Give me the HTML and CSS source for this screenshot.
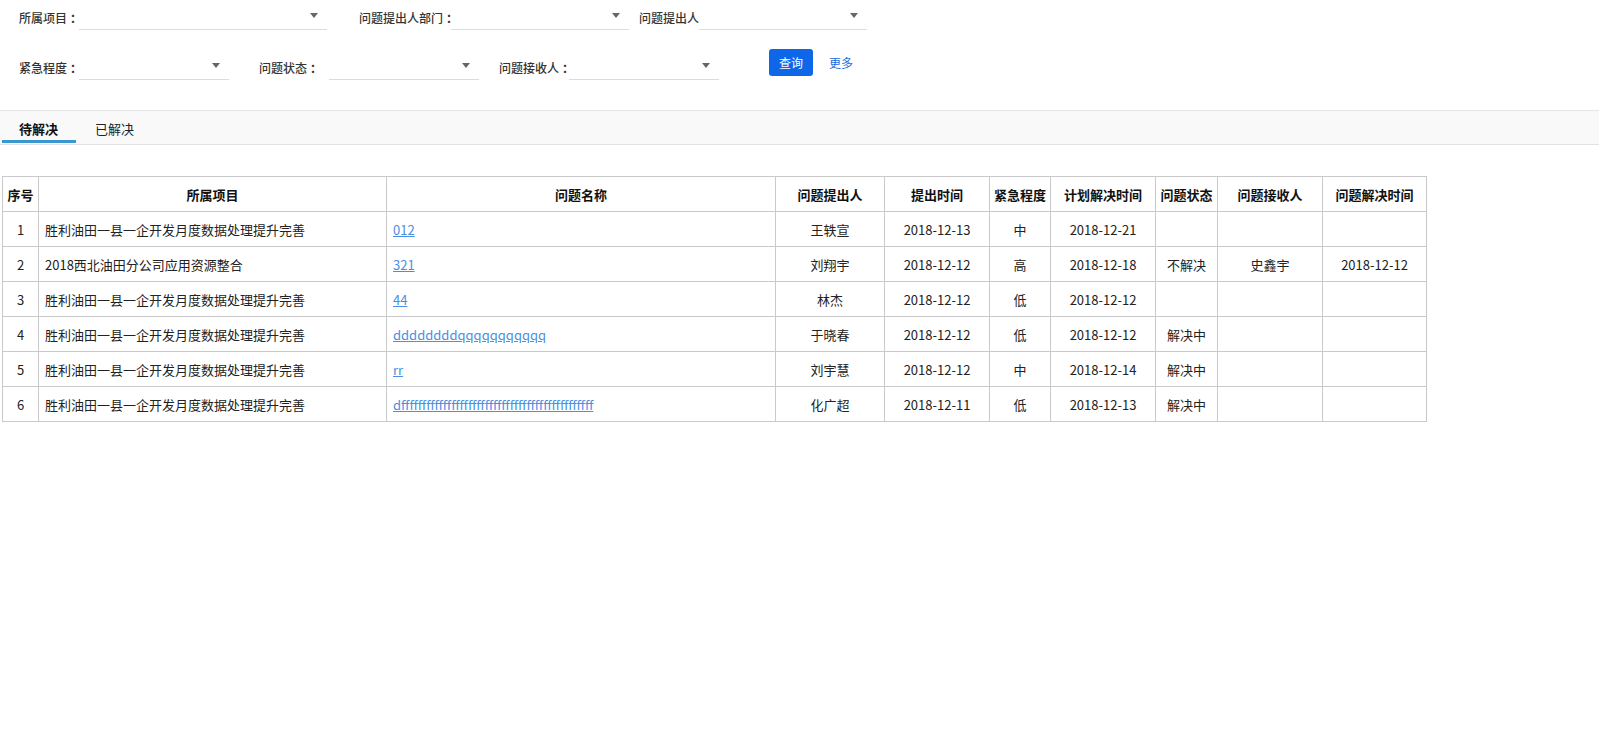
FILE: index.html
```html
<!DOCTYPE html>
<html lang="zh-CN">
<head>
<meta charset="utf-8">
<title>问题列表</title>
<link rel="stylesheet" href="styles.css">
</head>
<body>
<div class="filters">
  <div class="frow frow-1">
    <label class="lbl w60">所属项目<span class="colon">：</span></label>
    <div class="sel w248"><span class="caret"></span></div>
    <label class="lbl w92 ml32">问题提出人部门<span class="colon">：</span></label>
    <div class="sel w178"><span class="caret"></span></div>
    <label class="lbl w60 ml10">问题提出人</label>
    <div class="sel w168"><span class="caret"></span></div>
  </div>
  <div class="frow frow-2">
    <label class="lbl w60">紧急程度<span class="colon">：</span></label>
    <div class="sel w150"><span class="caret"></span></div>
    <label class="lbl w70 ml30">问题状态<span class="colon">：</span></label>
    <div class="sel w150"><span class="caret"></span></div>
    <label class="lbl w70 ml20">问题接收人<span class="colon">：</span></label>
    <div class="sel w150"><span class="caret"></span></div>
    <button class="btn-query">查询</button>
    <a class="more">更多</a>
  </div>
</div>

<div class="tabs">
  <div class="tab active">待解决</div>
  <div class="tab">已解决</div>
</div>

<div class="table-wrap">
<table class="grid">
  <colgroup>
    <col style="width:36px"><col style="width:348px"><col style="width:389px"><col style="width:109px"><col style="width:105px"><col style="width:61px"><col style="width:105px"><col style="width:62px"><col style="width:105px"><col style="width:104px">
  </colgroup>
  <thead>
    <tr><th>序号</th><th>所属项目</th><th>问题名称</th><th>问题提出人</th><th>提出时间</th><th>紧急程度</th><th>计划解决时间</th><th>问题状态</th><th>问题接收人</th><th>问题解决时间</th></tr>
  </thead>
  <tbody>
    <tr><td class="c">1</td><td class="l">胜利油田一县一企开发月度数据处理提升完善</td><td class="l"><a>012</a></td><td class="c">王轶宣</td><td class="c">2018-12-13</td><td class="c">中</td><td class="c">2018-12-21</td><td class="c"></td><td class="c"></td><td class="c"></td></tr>
    <tr><td class="c">2</td><td class="l">2018西北油田分公司应用资源整合</td><td class="l"><a>321</a></td><td class="c">刘翔宇</td><td class="c">2018-12-12</td><td class="c">高</td><td class="c">2018-12-18</td><td class="c">不解决</td><td class="c">史鑫宇</td><td class="c">2018-12-12</td></tr>
    <tr><td class="c">3</td><td class="l">胜利油田一县一企开发月度数据处理提升完善</td><td class="l"><a>44</a></td><td class="c">林杰</td><td class="c">2018-12-12</td><td class="c">低</td><td class="c">2018-12-12</td><td class="c"></td><td class="c"></td><td class="c"></td></tr>
    <tr><td class="c">4</td><td class="l">胜利油田一县一企开发月度数据处理提升完善</td><td class="l"><a>ddddddddqqqqqqqqqqq</a></td><td class="c">于晓春</td><td class="c">2018-12-12</td><td class="c">低</td><td class="c">2018-12-12</td><td class="c">解决中</td><td class="c"></td><td class="c"></td></tr>
    <tr><td class="c">5</td><td class="l">胜利油田一县一企开发月度数据处理提升完善</td><td class="l"><a>rr</a></td><td class="c">刘宇慧</td><td class="c">2018-12-12</td><td class="c">中</td><td class="c">2018-12-14</td><td class="c">解决中</td><td class="c"></td><td class="c"></td></tr>
    <tr><td class="c">6</td><td class="l">胜利油田一县一企开发月度数据处理提升完善</td><td class="l"><a>dffffffffffffffffffffffffffffffffffffffffffffff</a></td><td class="c">化广超</td><td class="c">2018-12-11</td><td class="c">低</td><td class="c">2018-12-13</td><td class="c">解决中</td><td class="c"></td><td class="c"></td></tr>
  </tbody>
</table>
</div>
</body>
</html>
```

FILE: styles.css
```css
* { box-sizing: border-box; }
html, body {
  margin: 0;
  padding: 0;
  background: #fff;
  font-family: "Microsoft YaHei", "Noto Sans CJK SC", "Noto Sans", sans-serif;
  color: #333;
}

.filters {
  height: 110px;
  padding-left: 19px;
}
.frow {
  display: flex;
  align-items: center;
}
.frow-1 { padding-top: 5px; height: 30px; box-sizing: content-box; }
.frow-2 { margin-top: 20px; height: 30px; }

.lbl {
  font-size: 12px;
  color: #333;
  line-height: 25px;
  white-space: nowrap;
  align-self: flex-start;
  font-weight: 500;
}
.colon {
  display: inline-block;
  padding-left: 3px;
  font-weight: bold;
}
.sel {
  height: 25px;
  border-bottom: 1px solid #dcdcdc;
  display: flex;
  justify-content: flex-end;
  align-items: flex-start;
  padding-top: 8px;
  padding-right: 9px;
  align-self: flex-start;
}
.caret {
  width: 0;
  height: 0;
  border-left: 4.5px solid transparent;
  border-right: 4.5px solid transparent;
  border-top: 5px solid #666;
}
.w60 { width: 60px; }
.w70 { width: 70px; }
.w92 { width: 92px; }
.w150 { width: 150px; }
.w168 { width: 168px; }
.w178 { width: 178px; }
.w248 { width: 248px; }
.ml10 { margin-left: 10px; }
.ml20 { margin-left: 20px; }
.ml30 { margin-left: 30px; }
.ml32 { margin-left: 32px; }

.btn-query {
  margin-left: 50px;
  width: 44px;
  height: 27px;
  border: none;
  border-radius: 3px;
  background: #0e66e9;
  color: #fff;
  font-family: inherit;
  font-size: 12px;
  padding: 0;
  align-self: flex-start;
  margin-top: -6px;
}
.more {
  margin-left: 16px;
  font-size: 12px;
  color: #1c6ce0;
  align-self: flex-start;
  margin-top: -6px;
  line-height: 27px;
}

.tabs {
  display: flex;
  height: 35px;
  background: #f9f9f9;
  border-top: 1px solid #e6e6e6;
  border-bottom: 1px solid #e2e2e2;
  padding-left: 2px;
}
.tab {
  font-size: 13px;
  color: #222;
  line-height: 36px;
  height: 32px;
  padding: 0 17px;
  margin-right: 2px;
}
.tab.active {
  font-weight: bold;
  color: #111;
  border-bottom: 3px solid #3b97cf;
  width: 74px;
}

.table-wrap {
  padding: 31px 0 0 2px;
}
.grid {
  border-collapse: collapse;
  table-layout: fixed;
  width: 1424px;
  font-size: 13px;
}
.grid th, .grid td {
  border: 1px solid #c9c9c9;
  height: 35px;
  padding: 0 6px;
  white-space: nowrap;
  overflow: hidden;
}
.grid th {
  font-weight: bold;
  color: #111;
  text-align: center;
  padding: 0;
}
.grid td { color: #222; }
.grid td.c { text-align: center; padding: 0; }
.grid td.l { text-align: left; }
.grid a {
  color: #4a8fe3;
  text-decoration: underline;
}
```
